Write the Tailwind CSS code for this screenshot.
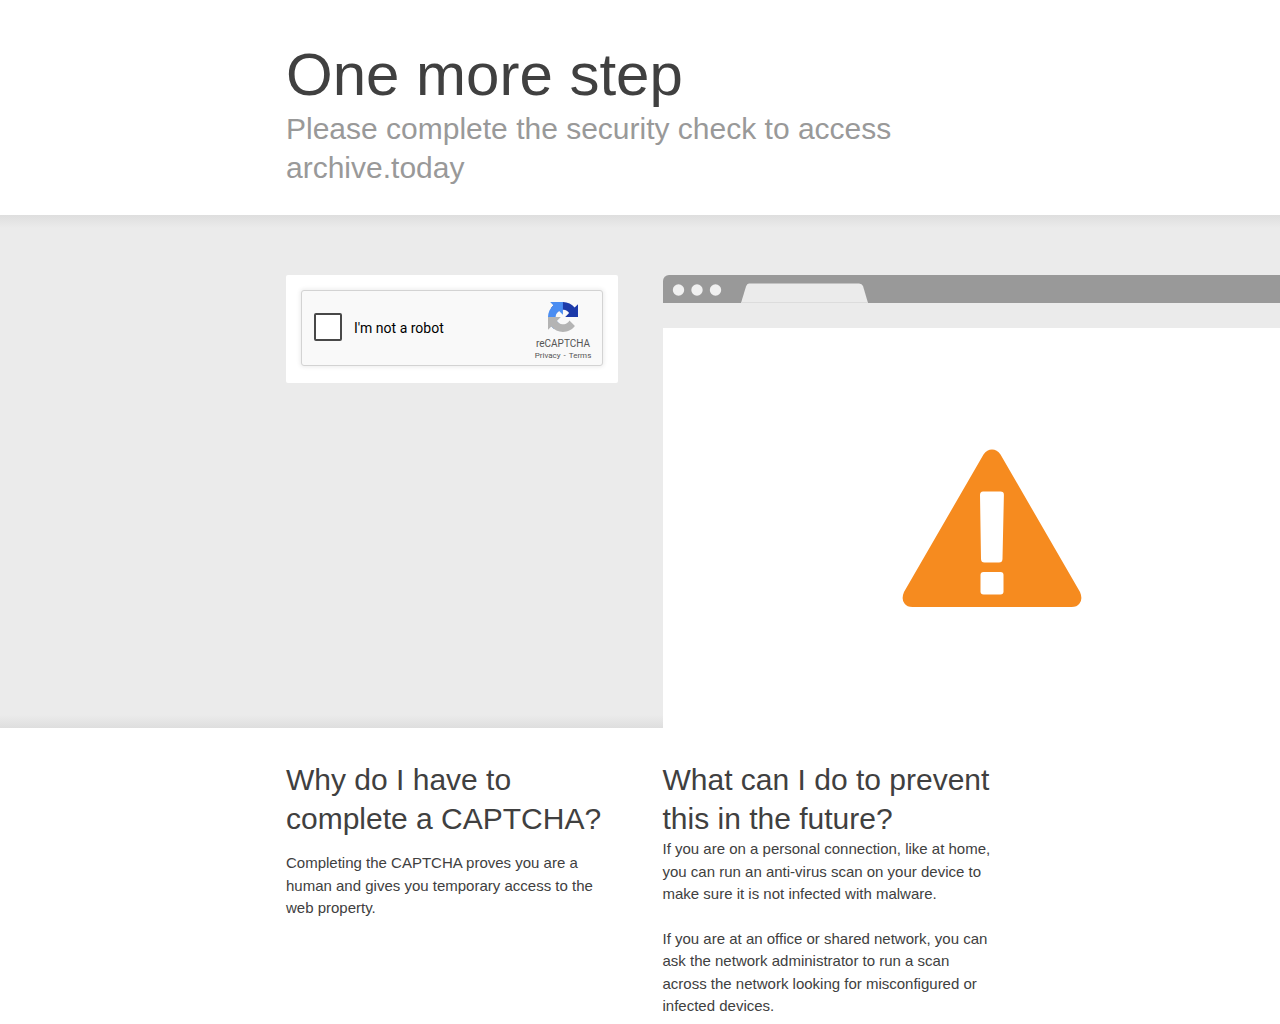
<!DOCTYPE html>
<html lang="en">
<head>
<meta charset="utf-8">
<meta name="viewport" content="width=device-width, initial-scale=1">
<title>One more step</title>
<script src="https://cdn.jsdelivr.net/npm/@tailwindcss/browser@4"></script>
</head>
<body class="min-h-screen overflow-x-hidden bg-white font-['Liberation_Sans',Arial,sans-serif] text-[15px] leading-normal text-[#404040]">

<header class="mx-auto max-w-[708px] pt-10 pb-7">
  <h1 class="text-[60px] leading-[69px]">One more step</h1>
  <h2 class="text-[30px] leading-[39px] text-[#999999]">Please complete the security check to access archive.today</h2>
</header>

<main>
  <section class="overflow-hidden bg-[#ebebeb] bg-[linear-gradient(to_bottom,#dedede,#ebebeb_13px,#ebebeb_calc(100%-13px),#dedede)]">
    <div class="mx-auto grid max-w-[708px] grid-cols-2 gap-[45px] pt-15">
      <form class="self-start rounded-xs bg-white px-[15px] pt-[15px] pb-[17px]">
        <div class="flex h-[76px] w-[302px] items-center rounded-[3px] border border-[#d3d3d3] bg-[#f9f9f9] pb-0.5 pl-3 shadow-[0_0_4px_1px_rgba(0,0,0,0.08)]">
          <input id="robot" type="checkbox" class="size-7 shrink-0 appearance-none rounded-xs border-2 border-[#484848] bg-white">
          <label for="robot" class="ml-3 grow pt-0.5 font-[Roboto,sans-serif] text-sm leading-[17px] text-black">I'm not a robot</label>
          <div class="flex w-[78px] shrink-0 flex-col items-center pt-2 font-[Roboto,sans-serif] text-[#555555]">
            <svg class="h-8 w-[30px]" viewBox="0 0 64 64" aria-hidden="true">
              <path fill="#1c3aa9" d="M64 31.955l-.033-1.370V4.687l-7.160 7.160C50.948 4.674 42.033.093 32.050.093c-10.390 0-19.622 4.960-25.461 12.642l11.736 11.860a15.550 15.550 0 0 1 4.754-5.334c2.050-1.600 4.952-2.906 8.968-2.906.485 0 .860.057 1.135.163 4.976.393 9.288 3.140 11.828 7.124l-8.307 8.307 27.297-.080"/>
              <path fill="#4a8df2" d="M31.862.094l-1.370.033H4.594l7.160 7.160C4.580 13.147 0 22.060 0 32.046c0 10.388 4.960 19.620 12.642 25.460L24.500 45.770a15.550 15.550 0 0 1-5.334-4.754c-1.600-2.050-2.906-4.952-2.906-8.968 0-.485.057-.860.163-1.135.393-4.976 3.140-9.288 7.124-11.828l8.307 8.307L31.860.095"/>
              <path fill="#b4b4b4" d="M.001 32.045l.033 1.370v25.898l7.160-7.160c5.860 7.173 14.774 11.754 24.760 11.754 10.388 0 19.620-4.960 25.460-12.642l-11.736-11.860a15.550 15.550 0 0 1-4.754 5.334c-2.050 1.600-4.952 2.906-8.968 2.906-.485 0-.860-.057-1.135-.163-4.976-.393-9.288-3.140-11.828-7.124l8.307-8.307-27.298.098"/>
            </svg>
            <div class="mt-1 text-[10px] leading-[14px]">reCAPTCHA</div>
            <div class="flex gap-[3px] text-[8px] leading-[10px]"><a href="#">Privacy</a><span>-</span><a href="#">Terms</a></div>
          </div>
        </div>
      </form>

      <div class="w-[658px]">
        <div class="flex h-7 items-center rounded-tl-[6px] bg-[#999999] pl-[9px]" aria-hidden="true">
          <svg class="h-7 w-52 shrink-0" viewBox="0 0 208 28">
            <g fill="#f0f0f0"><circle cx="6.500" cy="15" r="5.700"/><circle cx="25" cy="15" r="5.700"/><circle cx="43.500" cy="15" r="5.700"/></g>
            <path fill="#ebebeb" d="M69 28L74 11.500Q75 8.500 77 8.500H187Q190 8.500 191 11L196 28Z"/>
            <path stroke="#dcdcdc" d="M69 27.500H196"/>
          </svg>
        </div>
        <div class="h-[25px] bg-[#ebebeb]"></div>
        <div class="flex h-[400px] items-center justify-center bg-white">
          <svg class="h-[160px] w-[180px]" viewBox="0 0 180 160" role="img" aria-label="Warning">
            <path fill="#f68b1f" d="M81.500 6.500Q85 1.500 90 1.500Q95 1.500 98.500 6.500L178 144Q181 151 177.500 155.500Q175 159 169.500 159H10.500Q5 159 2.500 155.500Q-1 151 2 144Z"/>
            <path fill="#fff" d="M81 43.500H98.500Q102 43.500 101.900 47L100.500 111Q100.400 114.500 97 114.500H82.500Q79.100 114.500 79 111L78 47Q78 43.500 81 43.500Z"/>
            <rect x="78.500" y="124" width="23" height="22.500" rx="3" fill="#fff"/>
          </svg>
        </div>
      </div>
    </div>
  </section>

  <section class="mx-auto grid max-w-[708px] grid-cols-2 gap-[45px] pt-8">
    <div>
      <h2 class="text-[30px] leading-[39px]">Why do I have to complete a CAPTCHA?</h2>
      <p class="mt-3.5">Completing the CAPTCHA proves you are a human and gives you temporary access to the web property.</p>
    </div>
    <div>
      <h2 class="text-[30px] leading-[39px]">What can I do to prevent this in the future?</h2>
      <p>If you are on a personal connection, like at home, you can run an anti-virus scan on your device to make sure it is not infected with malware.</p>
      <p class="mt-[22px]">If you are at an office or shared network, you can ask the network administrator to run a scan across the network looking for misconfigured or infected devices.</p>
    </div>
  </section>
</main>
</body>
</html>
